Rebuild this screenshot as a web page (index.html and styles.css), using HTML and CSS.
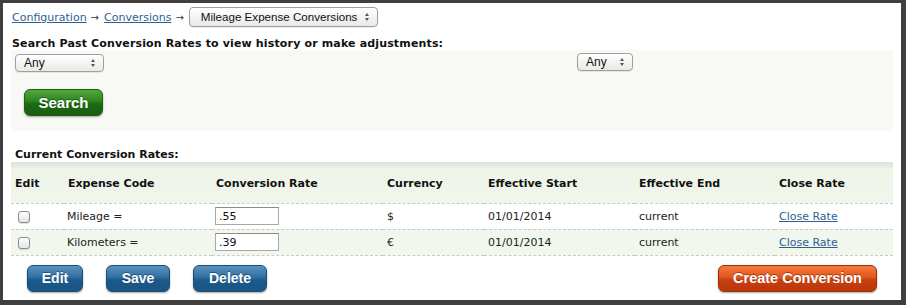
FILE: index.html
```html
<!DOCTYPE html>
<html>
<head>
<meta charset="utf-8">
<link rel="stylesheet" href="styles.css">
</head>
<body>
<div class="frame">
  <div class="crumbs">
    <a href="#" class="link">Configuration</a>
    <span class="arrow">→</span>
    <a href="#" class="link">Conversions</a>
    <span class="arrow">→</span>
    <span class="sel sel-wide"><select><option>Mileage Expense Conversions</option></select></span>
  </div>
  <h2 class="heading heading-search">Search Past Conversion Rates to view history or make adjustments:</h2>
  <div class="search-panel">
    <div class="filters">
      <span class="sel sel-any"><select><option>Any</option></select></span>
      <span class="sel sel-any2"><select><option>Any</option></select></span>
    </div>
    <button class="btn btn-green">Search</button>
  </div>
  <h2 class="heading heading-current">Current Conversion Rates:</h2>
  <table class="rates">
    <colgroup>
      <col class="c1"><col class="c2"><col class="c3"><col class="c4"><col class="c5"><col class="c6"><col class="c7">
    </colgroup>
    <thead>
      <tr>
        <th>Edit</th><th>Expense Code</th><th>Conversion Rate</th><th>Currency</th><th>Effective Start</th><th>Effective End</th><th>Close Rate</th>
      </tr>
    </thead>
    <tbody>
      <tr class="odd">
        <td><input type="checkbox" class="chk"></td>
        <td class="code">Mileage =</td>
        <td><input type="text" class="rate" value=".55"></td>
        <td>$</td>
        <td>01/01/2014</td>
        <td>current</td>
        <td><a href="#" class="link">Close Rate</a></td>
      </tr>
      <tr class="even">
        <td><input type="checkbox" class="chk"></td>
        <td class="code">Kilometers =</td>
        <td><input type="text" class="rate" value=".39"></td>
        <td>€</td>
        <td>01/01/2014</td>
        <td>current</td>
        <td><a href="#" class="link">Close Rate</a></td>
      </tr>
    </tbody>
  </table>
  <div class="actions">
    <button class="btn btn-blue btn-edit">Edit</button>
    <button class="btn btn-blue btn-save">Save</button>
    <button class="btn btn-blue btn-delete">Delete</button>
    <button class="btn btn-orange btn-create">Create Conversion</button>
  </div>
</div>
</body>
</html>
```
FILE: styles.css
```css
html, body {
  margin: 0;
  padding: 0;
  background: #3f3f3f;
}
body {
  width: 906px;
  height: 305px;
  overflow: hidden;
}
.frame {
  margin: 3px 5px 5px 3px;
  width: 898px;
  height: 297px;
  box-sizing: border-box;
  padding: 4px 8px 0 8px;
  background: #fff;
  font-family: "DejaVu Sans", Verdana, sans-serif;
  font-size: 11px;
  color: #222;
}
.link {
  color: #2e5f91;
  text-decoration: underline;
}
.crumbs {
  height: 20px;
  display: flex;
  align-items: center;
  padding-left: 1px;
}
.arrow {
  margin: 0 5px 0 4px;
  font-size: 10px;
  color: #333;
}
.sel {
  position: relative;
  display: inline-block;
  height: 18px;
  box-sizing: border-box;
  border: 1px solid #9e9e9e;
  border-radius: 4px;
  background: linear-gradient(#ffffff, #f1f1f1 60%, #e9e9e9);
  box-shadow: 0 1px 1px rgba(0,0,0,0.08);
}
.sel select {
  appearance: none;
  -webkit-appearance: none;
  border: 0;
  background: transparent;
  font-family: "Liberation Sans", Arial, sans-serif;
  font-size: 12px;
  color: #111;
  height: 16px;
  line-height: 16px;
  padding: 0 0 0 8px;
  margin: 0;
  width: 100%;
  outline: none;
}
.sel::before, .sel::after {
  content: "";
  position: absolute;
  right: 8px;
  width: 0;
  height: 0;
  border-left: 2.5px solid transparent;
  border-right: 2.5px solid transparent;
}
.sel::before {
  top: 4px;
  border-bottom: 3px solid #555;
}
.sel::after {
  top: 9px;
  border-top: 3px solid #555;
}
.sel-wide {
  width: 189px;
  height: 20px;
}
.sel-wide select {
  height: 18px;
  line-height: 18px;
  padding-left: 11px;
  font-size: 11.6px;
}
.sel-wide::before { top: 5px; }
.sel-wide::after { top: 10px; }
.heading {
  margin: 10px 0 0 0;
  padding-left: 1px;
  font-size: 11px;
  line-height: 13px;
  font-weight: bold;
  color: #111;
}
.heading-search {
  letter-spacing: 0.15px;
}
.search-panel {
  background: #f8f9f5;
  padding: 4px 4px 15px 4px;
}
.filters {
  display: grid;
  grid-template-columns: 562px 56px;
  height: 18px;
}
.sel-any {
  width: 89px;
}
.sel-any2 {
  width: 56px;
  margin-top: -1px;
}
.btn {
  display: inline-block;
  height: 27px;
  box-sizing: border-box;
  border-radius: 6px;
  font-family: "Liberation Sans", Arial, sans-serif;
  font-weight: bold;
  font-size: 14px;
  color: #fff;
  text-shadow: 0 -1px 0 rgba(0,0,0,0.35);
  padding: 0 0 1px 0;
  cursor: pointer;
  box-shadow: 0 1px 2px rgba(0,0,0,0.35);
}
.btn-green {
  margin: 17px 0 0 9px;
  width: 79px;
  border: 1px solid #1f5f12;
  background: linear-gradient(#52a83d, #2d8420 45%, #1c6a12 55%, #1a5e10);
  font-size: 15px;
}
.heading-current {
  margin-top: 17px;
  padding-left: 4px;
  line-height: 14px;
}
.rates {
  width: 882px;
  border-collapse: collapse;
  table-layout: fixed;
}
.c1 { width: 53px; }
.c2 { width: 148px; }
.c3 { width: 171px; }
.c4 { width: 101px; }
.c5 { width: 151px; }
.c6 { width: 140px; }
.c7 { width: 118px; }
.rates th, .rates td {
  padding: 0 0 0 4px;
  text-align: left;
  vertical-align: middle;
  border-bottom: 1px dashed #c8cbc4;
}
.rates thead tr {
  height: 41px;
  background: linear-gradient(#dcdedb, #eef4e8 7px, #f1f6ec);
}
.rates th {
  font-weight: bold;
  color: #111;
  padding-top: 2px;
}
.rates tbody tr {
  height: 26px;
}
.rates tr.odd { background: #fff; }
.rates tr.even { background: #f1f7ec; }
.code { padding-left: 3px !important; }
.chk {
  appearance: none;
  -webkit-appearance: none;
  width: 12px;
  height: 12px;
  margin: 1px 0 0 3px;
  border: 1px solid #8a8a8a;
  border-radius: 3px;
  background: linear-gradient(#ffffff, #e4e4e4);
  box-shadow: 0 1px 1px rgba(0,0,0,0.12);
  display: block;
}
.rate {
  width: 64px;
  height: 18px;
  box-sizing: border-box;
  border: 1px solid #a8a8a8;
  border-top-color: #8c8c8c;
  padding: 0 3px;
  margin: 0 0 0 -1px;
  font-family: "DejaVu Sans", Verdana, sans-serif;
  font-size: 11px;
  color: #111;
  display: block;
}
.actions {
  display: flex;
  margin-top: 9px;
  padding: 0 16px;
  gap: 23px;
}
.btn-blue {
  border: 1px solid #1b4c73;
  background: linear-gradient(#5a93c0, #2f6fa1 45%, #1b5a8c 55%, #1a5482);
}
.btn-edit { width: 56px; }
.btn-save { width: 64px; }
.btn-delete { width: 74px; }
.btn-orange {
  margin-left: auto;
  width: 159px;
  border: 1px solid #9a2f0a;
  background: linear-gradient(#f57a3c, #e2561e 45%, #c8400f 55%, #b8360c);
  font-size: 14.5px;
}
```
